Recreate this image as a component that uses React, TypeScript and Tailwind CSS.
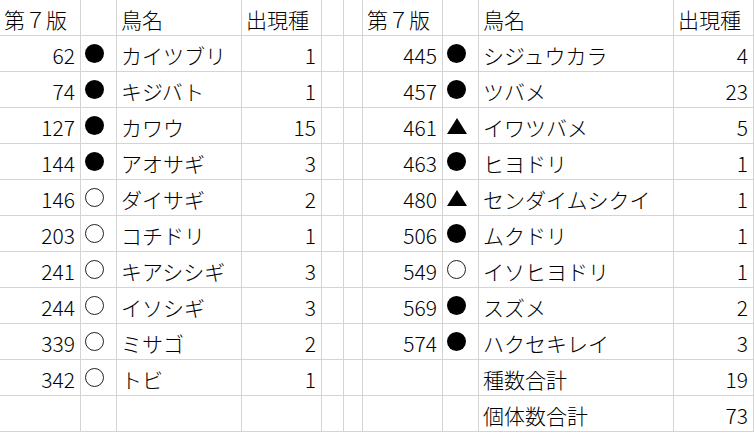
import type { ReactNode } from "react";

type Mark = "●" | "○" | "▲" | "";

interface Bird {
  no: string;
  mark: Mark;
  name: string;
  count: string;
}

const left: Bird[] = [
  { no: "62", mark: "●", name: "カイツブリ", count: "1" },
  { no: "74", mark: "●", name: "キジバト", count: "1" },
  { no: "127", mark: "●", name: "カワウ", count: "15" },
  { no: "144", mark: "●", name: "アオサギ", count: "3" },
  { no: "146", mark: "○", name: "ダイサギ", count: "2" },
  { no: "203", mark: "○", name: "コチドリ", count: "1" },
  { no: "241", mark: "○", name: "キアシシギ", count: "3" },
  { no: "244", mark: "○", name: "イソシギ", count: "3" },
  { no: "339", mark: "○", name: "ミサゴ", count: "2" },
  { no: "342", mark: "○", name: "トビ", count: "1" },
  { no: "", mark: "", name: "", count: "" },
];

const right: Bird[] = [
  { no: "445", mark: "●", name: "シジュウカラ", count: "4" },
  { no: "457", mark: "●", name: "ツバメ", count: "23" },
  { no: "461", mark: "▲", name: "イワツバメ", count: "5" },
  { no: "463", mark: "●", name: "ヒヨドリ", count: "1" },
  { no: "480", mark: "▲", name: "センダイムシクイ", count: "1" },
  { no: "506", mark: "●", name: "ムクドリ", count: "1" },
  { no: "549", mark: "○", name: "イソヒヨドリ", count: "1" },
  { no: "569", mark: "●", name: "スズメ", count: "2" },
  { no: "574", mark: "●", name: "ハクセキレイ", count: "3" },
  { no: "", mark: "", name: "種数合計", count: "19" },
  { no: "", mark: "", name: "個体数合計", count: "73" },
];

function Cell({
  children,
  align = "left",
}: {
  children?: ReactNode;
  align?: "left" | "right";
}) {
  return (
    <div
      className={
        align === "right"
          ? "flex h-[36px] items-center justify-end overflow-hidden whitespace-nowrap border-b border-r border-[#d4d4d4] pr-[5px] pt-[3px]"
          : "flex h-[36px] items-center overflow-hidden whitespace-nowrap border-b border-r border-[#d4d4d4] pl-[4px] pt-[3px]"
      }
    >
      {children}
    </div>
  );
}

function MarkCell({ mark }: { mark: Mark }) {
  return (
    <div className="flex h-[36px] items-center border-b border-r border-[#d4d4d4] pl-[4px]">
      {mark === "●" && (
        <span className="block size-[19px] rounded-full bg-black" />
      )}
      {mark === "○" && (
        <span className="block size-[19px] rounded-full border border-[#222]" />
      )}
      {mark === "▲" && (
        <svg width="20" height="16" viewBox="0 0 20 16">
          <polygon points="10,0 20,16 0,16" fill="black" />
        </svg>
      )}
    </div>
  );
}

export default function App() {
  return (
    <div
      className="h-[433px] w-[754px] overflow-hidden bg-white text-[21px] font-light leading-none text-black"
      style={{ fontFamily: '"Noto Sans CJK JP", "Noto Sans", sans-serif' }}
    >
      <div className="grid grid-cols-[81px_36px_125px_80px_22px_19px_80px_36px_195px_80px]">
        <Cell>第７版</Cell>
        <Cell />
        <Cell>鳥名</Cell>
        <Cell>出現種</Cell>
        <Cell />
        <Cell />
        <Cell>第７版</Cell>
        <Cell />
        <Cell>鳥名</Cell>
        <Cell>出現種</Cell>

        {left.map((l, i) => {
          const r = right[i];
          return [
            <Cell key={`a${i}`} align="right">{l.no}</Cell>,
            <MarkCell key={`b${i}`} mark={l.mark} />,
            <Cell key={`c${i}`}>{l.name}</Cell>,
            <Cell key={`d${i}`} align="right">{l.count}</Cell>,
            <Cell key={`e${i}`} />,
            <Cell key={`f${i}`} />,
            <Cell key={`g${i}`} align="right">{r.no}</Cell>,
            <MarkCell key={`h${i}`} mark={r.mark} />,
            <Cell key={`i${i}`}>{r.name}</Cell>,
            <Cell key={`j${i}`} align="right">{r.count}</Cell>,
          ];
        })}
      </div>
    </div>
  );
}
